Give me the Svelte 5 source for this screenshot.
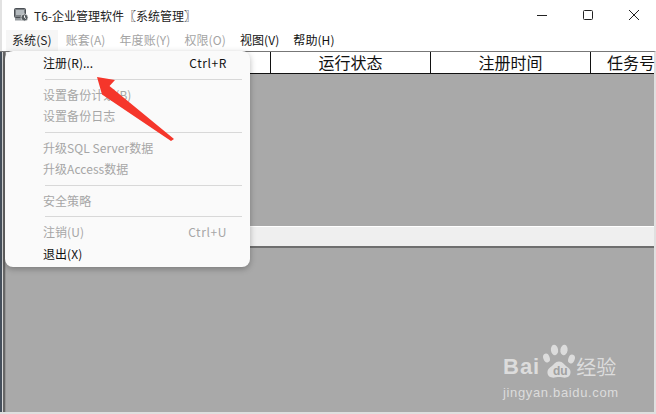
<script>
	const topMenus = [
		{ label: "系统(S)", on: true },
		{ label: "账套(A)" },
		{ label: "年度账(Y)" },
		{ label: "权限(O)" },
		{ label: "视图(V)", dark: true },
		{ label: "帮助(H)", dark: true }
	];
	const columns = [
		{ label: "", width: 265 },
		{ label: "运行状态", width: 160 },
		{ label: "注册时间", width: 160 },
		{ label: "任务号", width: 63 }
	];
	const groups = [
		[{ label: "注册(R)...", key: "Ctrl+R", active: true }],
		[{ label: "设置备份计划(B)" }, { label: "设置备份日志" }],
		[{ label: "升级SQL Server数据" }, { label: "升级Access数据" }],
		[{ label: "安全策略", short: true }],
		[{ label: "注销(U)", key: "Ctrl+U" }, { label: "退出(X)", active: true, low: true }]
	];
</script>

<div class="window">
	<header class="titlebar">
		<svg class="app-icon" width="16" height="16" viewBox="0 0 16 16">
			<rect x="1.500" y="1.500" width="11" height="9" rx="1" fill="#7d8286" stroke="#4a4f54" />
			<rect x="3" y="3" width="8" height="5" fill="#b4babe" />
			<rect x="2" y="11" width="10" height="2.500" fill="#94999d" />
			<circle cx="11.500" cy="10.500" r="3.500" fill="#565c60" stroke="#eee" stroke-width="0.700" />
			<path d="M11.500 8.500v2l1.400 1" stroke="#fff" fill="none" />
		</svg>
		<span class="title">T6-企业管理软件<b>〖</b>系统管理<b>〗</b></span>
		<div class="controls">
			<svg width="14" height="14" viewBox="0 0 14 14"><path d="M2 7.500h10" stroke="#222" /></svg>
			<svg width="14" height="14" viewBox="0 0 14 14"><rect x="2.500" y="2.500" width="9" height="9" rx="1" fill="none" stroke="#222" /></svg>
			<svg width="14" height="14" viewBox="0 0 14 14"><path d="M2 2l10 10M12 2L2 12" stroke="#222" /></svg>
		</div>
	</header>

	<nav class="menubar">
		{#each topMenus as m}
			<span class="top" class:on={m.on} class:dark={m.dark}>{m.label}</span>
		{/each}
	</nav>

	<main class="client">
		<div class="thead">
			{#each columns as c}
				<div class="th" style:width={c.width + "px"}>{c.label}</div>
			{/each}
		</div>
		<div class="pane-top"></div>
		<div class="splitter"></div>
		<div class="pane-bottom"></div>
	</main>

	<div class="menu">
		{#each groups as group, i}
			{#if i > 0}<div class="sep"></div>{/if}
			{#each group as item}
				<div class="item" class:active={item.active} class:short={item.short} class:low={item.low}>
					<span>{item.label}</span>
					{#if item.key}<span class="key">{item.key}</span>{/if}
				</div>
			{/each}
		{/each}
	</div>

	<svg class="arrow" width="90" height="75" viewBox="0 0 90 75">
		<path d="M1 1L19 4 13.500 10 78 63 75 65 6 18.500Z" fill="#f5362b" />
	</svg>

	<div class="watermark">
		<div class="brand">
			<span class="bai">Bai</span>
			<svg class="paw" width="36" height="36" viewBox="0 0 36 36">
				<g fill="#dcdcdc">
					<ellipse cx="5.500" cy="14" rx="3.200" ry="4.500" transform="rotate(-20 5.500 14)" />
					<ellipse cx="13.500" cy="6" rx="3.600" ry="5.200" transform="rotate(-8 13.500 6)" />
					<ellipse cx="23" cy="6" rx="3.600" ry="5.200" transform="rotate(8 23 6)" />
					<ellipse cx="30.500" cy="15" rx="3.200" ry="4.500" transform="rotate(20 30.500 15)" />
					<path d="M18 17.500c4 0 5 3.500 9 6 4 3 3 8.500-1 9.800-3 .9-5-.3-8-.3s-5 1.200-8 .3c-4-1.300-5-6.800-1-9.800 4-2.500 5-6 9-6z" />
				</g>
			</svg>
			<span class="du">du</span>
			<span class="jy">经验</span>
		</div>
		<div class="url">jingyan.baidu.com</div>
	</div>
</div>

<style>
	:global(body) {
		margin: 0;
		background: #fff;
	}
	.window {
		position: relative;
		width: 656px;
		height: 414px;
		overflow: hidden;
		display: flex;
		flex-direction: column;
		font-family: "Noto Sans CJK SC", "Liberation Sans", sans-serif;
		font-size: 12px;
		color: #111;
		background: #fff;
	}
	.titlebar {
		height: 30px;
		display: flex;
		align-items: center;
		padding-left: 11px;
		border-left: 2px solid #e2e2e2;
	}
	.app-icon {
		margin-right: 5px;
	}
	.title {
		font-size: 12px;
		color: #222;
	}
	.title b {
		color: #111;
	}
	.controls {
		margin-left: auto;
		display: flex;
		gap: 32px;
		padding-right: 15px;
	}
	.menubar {
		height: 21px;
		display: flex;
		padding-left: 4px;
		background: #fff;
		border-left: 2px solid #e2e2e2;
	}
	.top {
		padding: 0 6px;
		line-height: 20px;
		letter-spacing: 0.08px;
		color: #a4a4a4;
		margin-right: 2px;
	}
	.top.on {
		background: #f6f6f6;
		color: #222;
	}
	.top.dark {
		color: #111;
	}
	.client {
		flex: 1;
		display: flex;
		flex-direction: column;
		padding-left: 6px;
		background: linear-gradient(to right, #46505c 0 2px, #d8d8d8 2px 3px, #666 3px 5px, #969696 5px 6px, #a9a9a9 6px);
		border-top: 1px solid #777;
		border-right: 2px solid #e0e0e0;
		border-bottom: 2px solid #e0e0e0;
	}
	.thead {
		display: flex;
		height: 21px;
		background: #fff;
		border-bottom: 1px solid #111;
		box-sizing: content-box;
		flex: none;
	}
	.th {
		flex: none;
		text-align: center;
		font-size: 16px;
		line-height: 21px;
		border-right: 1px solid #111;
		box-sizing: border-box;
		color: #111;
	}
	.th:last-child {
		border-right: none;
		text-align: left;
		padding-left: 16px;
		white-space: nowrap;
	}
	.pane-top {
		height: 152px;
		flex: none;
	}
	.splitter {
		height: 19px;
		flex: none;
		background: #efefef;
		border-bottom: 2px solid #6e6e6e;
		border-top: 1px solid #fff;
		box-sizing: content-box;
	}
	.pane-bottom {
		flex: 1;
	}
	.menu {
		position: absolute;
		left: 5px;
		top: 51px;
		width: 245px;
		box-sizing: border-box;
		height: 216px;
		padding: 2px 8px 0 38px;
		background: #fafafa;
		border-radius: 8px;
		box-shadow: 0 2px 6px rgba(0, 0, 0, 0.28);
	}
	.item {
		display: flex;
		justify-content: space-between;
		height: 21px;
		line-height: 19px;
		padding-right: 15px;
		letter-spacing: 0.05px;
		color: #a6a6a6;
	}
	.item.short {
		height: 20px;
	}
	.item.low {
		margin-top: 1px;
	}
	.item.active {
		color: #111;
	}
	.key {
		letter-spacing: 0.6px;
	}
	.sep {
		height: 1px;
		margin: 5px 0 5px 2px;
		background: #d8d8d8;
	}
	.arrow {
		position: absolute;
		left: 96px;
		top: 76px;
	}
	.watermark {
		position: absolute;
		left: 503px;
		top: 344px;
		color: #dcdcdc;
	}
	.brand {
		position: relative;
		display: flex;
		align-items: flex-end;
		height: 36px;
	}
	.bai {
		font-family: "Liberation Sans", sans-serif;
		font-weight: 700;
		font-size: 22px;
		letter-spacing: 1px;
		line-height: 26px;
	}
	.paw {
		margin-left: 1px;
	}
	.du {
		position: absolute;
		left: 50px;
		top: 20px;
		font-family: "Liberation Sans", sans-serif;
		font-weight: 700;
		font-size: 12px;
		color: #a0a0a0;
	}
	.jy {
		font-size: 20px;
		line-height: 26px;
		margin-left: -1px;
	}
	.url {
		font-family: "Liberation Sans", sans-serif;
		font-size: 13px;
		letter-spacing: 0.65px;
		line-height: 15px;
		margin-top: 5px;
	}
</style>
